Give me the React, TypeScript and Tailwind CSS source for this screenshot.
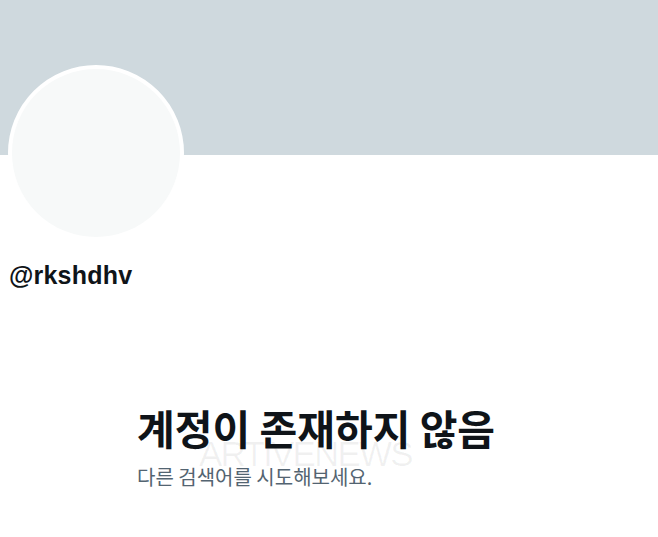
export default function App() {
  return (
    <div
      className="relative w-[658px] h-[537px] overflow-hidden bg-white"
      style={{ fontFamily: '"Liberation Sans", "Noto Sans CJK KR", sans-serif' }}
    >
      <div className="h-[155px] bg-[#cfd9de]" />
      <div className="ml-[8px] -mt-[90px] w-[176px] h-[176px] rounded-full border-4 border-white bg-[#f7f9f9]" />
      <p className="ml-[9px] mt-[22px] text-[25px] font-bold leading-none tracking-[0.2px] text-[#0f1419]">@rkshdhv</p>
      <div className="relative ml-[137px] mt-[115px]">
        <h1
          className="text-[41px] font-bold leading-[48px] text-[#0f1419]"
          style={{ fontFamily: '"Noto Sans CJK KR", sans-serif' }}
        >
          계정이 존재하지 않음
        </h1>
        <p
          className="mt-[13px] text-[20px] leading-[26px] text-[#536471]"
          style={{ fontFamily: '"Noto Sans CJK KR", sans-serif' }}
        >
          다른 검색어를 시도해보세요.
        </p>
        <span className="pointer-events-none absolute left-[62px] top-[25px] text-[35px] font-light tracking-[-1.8px] text-[#0f1419]/[0.06]">
          ARTIVENEWS
        </span>
      </div>
    </div>
  );
}
